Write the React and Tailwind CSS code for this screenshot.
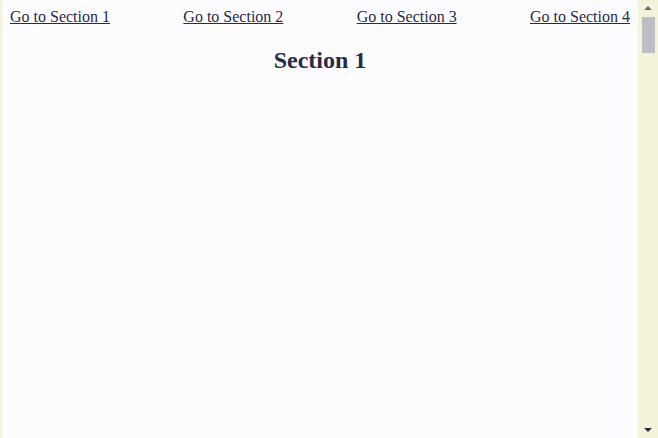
export default function App() {
  const links = ['Go to Section 1', 'Go to Section 2', 'Go to Section 3', 'Go to Section 4']

  return (
    <div className="flex h-[438px] w-[658px] overflow-hidden bg-[#fcfcff] font-['Liberation_Serif',serif] text-[#2b2a45]">
      <div className="w-[2px] bg-[#f5f4d4]" />
      <div className="flex-1">
        <nav className="flex justify-between pl-[8px] pr-[8px] pt-[7px] text-[16px] leading-[20px]">
          {links.map((label) => (
            <a key={label} href="#" className="underline">
              {label}
            </a>
          ))}
        </nav>
        <h2 className="mt-[19px] text-center text-[24px] font-bold leading-[28px]">Section 1</h2>
      </div>
      <div className="flex w-[20px] flex-col items-center bg-[#f3f2da]">
        <div className="mt-[6px] h-0 w-0 border-x-[4px] border-b-[4px] border-x-transparent border-b-[#6b6b7a]" />
        <div className="mt-[7px] h-[36px] w-[13px] bg-[#bebdc6]" />
        <div className="flex-1" />
        <div className="mb-[6px] h-0 w-0 border-x-[4px] border-t-[4px] border-x-transparent border-t-[#2b2a45]" />
      </div>
    </div>
  )
}
